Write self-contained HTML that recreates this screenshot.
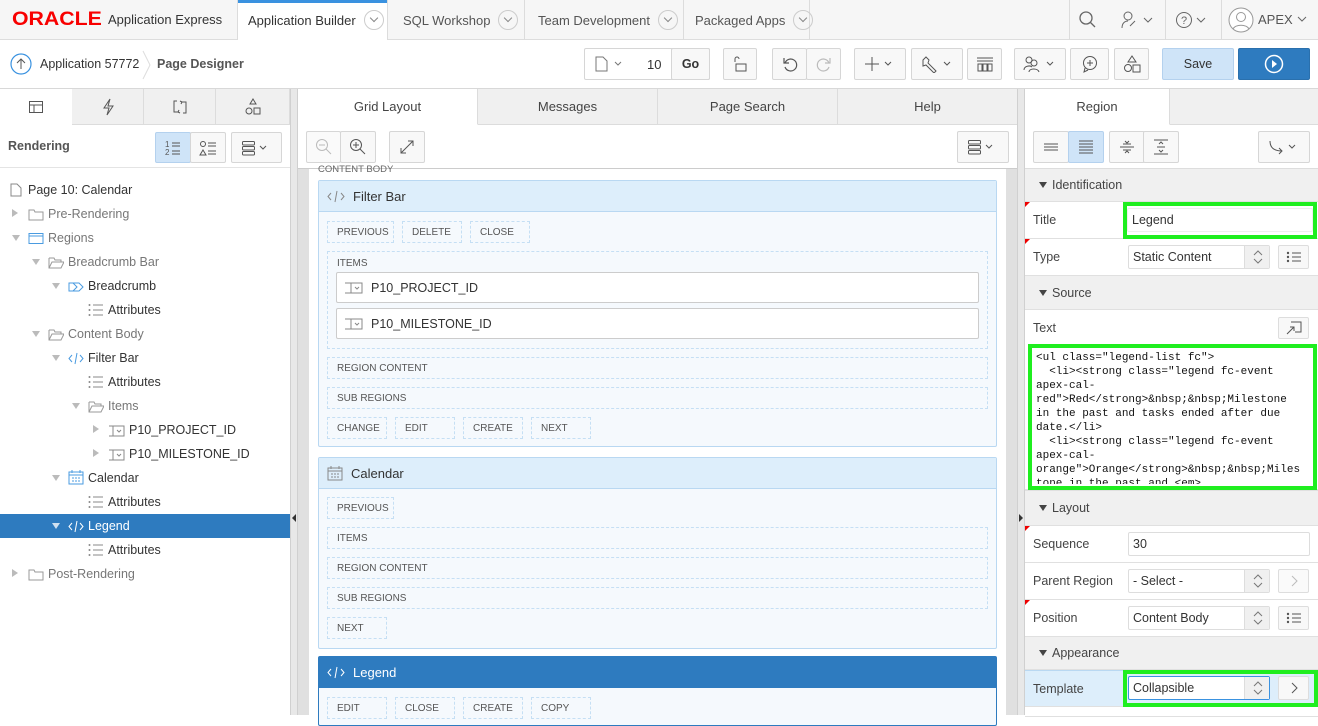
<!DOCTYPE html>
<html><head><meta charset="utf-8">
<style>
*{box-sizing:border-box;margin:0;padding:0}
body{width:1318px;height:715px;overflow:hidden;font-family:"Liberation Sans",sans-serif;font-size:13px;color:#333;background:#fff;position:relative}
.a{position:absolute}
.btn{position:absolute;border:1px solid #d6d6d6;border-radius:2px;background:#f8f8f8;display:flex;align-items:center;justify-content:center;color:#555}
.sep{position:absolute;top:0;height:40px;width:1px;background:#dcdcdc}
.tab{position:absolute;top:0;height:40px;display:flex;align-items:center;font-size:13px;color:#555;padding-left:11px}
.cv{display:inline-block;width:20px;height:20px;border:1px solid #ccc;border-radius:50%;margin-left:8px;position:relative}
.cv:after{content:"";position:absolute;left:6px;top:4px;width:5px;height:5px;border-right:1px solid #888;border-bottom:1px solid #888;transform:rotate(45deg)}
.ptab{position:absolute;top:89px;height:36px;background:#f0f0f0;border-bottom:1px solid #dcdcdc;border-right:1px solid #dcdcdc;display:flex;align-items:center;justify-content:center;color:#444}
.tr{position:absolute;height:24px;line-height:24px;font-size:12.5px;color:#333;white-space:nowrap}
.tr.g{color:#777}
.ar{display:inline-block;width:0;height:0;border-left:4px solid transparent;border-right:4px solid transparent;border-top:6px solid #bbb;margin-right:8px;vertical-align:1px}
.ar.r{border-top:4px solid transparent;border-bottom:4px solid transparent;border-left:6px solid #bbb;border-right:0;margin-right:10px}
.ic{display:inline-block;vertical-align:-3px;margin-right:4px}
.reg{position:absolute;left:318px;width:679px;border:1px solid #b9d8f2;background:#f5f9fd;border-radius:2px}
.rh{height:31px;background:#ddeefb;border-bottom:1px solid #b9d8f2;display:flex;align-items:center;padding-left:8px;font-size:13px;color:#333}
.dz{position:absolute;border:1px dashed #c5dff4;font-size:10px;color:#555;padding-left:9px;display:flex;align-items:center;height:22px}
.item{position:absolute;left:336px;width:643px;height:31px;background:#fff;border:1px solid #ccc;border-radius:2px;display:flex;align-items:center;padding-left:8px;font-size:12.5px;color:#333}
.ph{position:absolute;left:1025px;width:293px;background:#f0f0f0;border-bottom:1px solid #e0e0e0;font-size:12.5px;color:#444;padding-left:14px;display:flex;align-items:center}
.ph:before{content:"";border-left:4px solid transparent;border-right:4px solid transparent;border-top:6px solid #444;margin-right:5px}
.pr{position:absolute;left:1025px;width:293px;height:37px;border-bottom:1px solid #e0e0e0;background:#fff;font-size:12.5px;color:#444;padding-left:8px;display:flex;align-items:center}
.req:before{content:"";position:absolute;left:0;top:0;border-top:5px solid #e00;border-right:5px solid transparent}
.inp{position:absolute;height:24px;border:1px solid #ddd;background:#fff;font-size:12.5px;color:#333;display:flex;align-items:center;padding-left:4px;border-radius:2px}
.sel:after{content:"";position:absolute;right:0;top:0;width:24px;height:22px;background:#f0f0f0 url("") ;border-left:1px solid #ddd}
.ud{position:absolute;width:10px;height:16px}
.sb{position:absolute;height:24px;width:31px;border:1px solid #ddd;background:#f8f8f8;border-radius:2px;display:flex;align-items:center;justify-content:center}
.green{position:absolute;border:4px solid #1fee1f}
</style></head><body>

<!-- top bar -->
<div class="a" style="left:0;top:0;width:1318px;height:40px;background:#f6f6f6;border-bottom:1px solid #ddd"></div>
<div class="a" style="left:12px;top:10px;font-size:19px;font-weight:bold;color:#f80000;line-height:20px;transform:scaleX(1.12);transform-origin:left">ORACLE</div>
<div class="a" style="left:108px;top:12px;font-size:13px;color:#333">Application Express</div>
<div class="a" style="left:237px;top:0;width:150px;height:41px;background:#fff;border-top:3px solid #3a92e0"></div>
<div class="sep" style="left:237px"></div><div class="sep" style="left:387px"></div><div class="sep" style="left:524px"></div><div class="sep" style="left:683px"></div><div class="sep" style="left:809px"></div>
<div class="tab" style="left:237px;color:#333">Application Builder<span class="cv"></span></div>
<div class="tab" style="left:392px">SQL Workshop<span class="cv"></span></div>
<div class="tab" style="left:527px">Team Development<span class="cv"></span></div>
<div class="tab" style="left:684px">Packaged Apps<span class="cv"></span></div>
<div class="sep" style="left:1069px"></div><div class="sep" style="left:1165px"></div><div class="sep" style="left:1221px"></div>
<svg class="a" style="left:1078px;top:10px" width="20" height="20"><circle cx="8" cy="8" r="6" fill="none" stroke="#666" stroke-width="1.3"/><line x1="12.5" y1="12.5" x2="17" y2="17" stroke="#666" stroke-width="1.3"/></svg>
<svg class="a" style="left:1120px;top:10px" width="34" height="20"><circle cx="8" cy="6" r="4" fill="none" stroke="#666"/><path d="M2 18c0-5 3-7 6-7M10 16l5-5" stroke="#666" fill="none"/><path d="M24 8l4 4 4-4" stroke="#666" fill="none"/></svg>
<svg class="a" style="left:1175px;top:10px" width="36" height="20"><circle cx="9" cy="10" r="7.5" fill="none" stroke="#666"/><text x="6" y="14" font-size="11" fill="#666" font-family="Liberation Sans">?</text><path d="M22 8l4 4 4-4" stroke="#666" fill="none"/></svg>
<svg class="a" style="left:1228px;top:7px" width="26" height="26"><circle cx="13" cy="13" r="12" fill="#fff" stroke="#999"/><circle cx="13" cy="10" r="4.5" fill="none" stroke="#999"/><path d="M5 22c2-5 14-5 16 0" fill="none" stroke="#999"/></svg>
<div class="a" style="left:1258px;top:12px;font-size:13px;color:#555">APEX</div>
<svg class="a" style="left:1296px;top:14px" width="12" height="10"><path d="M2 3l4 4 4-4" stroke="#666" fill="none"/></svg>

<!-- toolbar -->
<div class="a" style="left:0;top:40px;width:1318px;height:49px;background:#fff;border-bottom:1px solid #d8d8d8"></div>
<svg class="a" style="left:10px;top:53px" width="22" height="22"><circle cx="11" cy="11" r="10" fill="none" stroke="#3a92e0" stroke-width="1.2"/><path d="M11 16V6M7 10l4-4 4 4" stroke="#555" fill="none"/></svg>
<div class="a" style="left:40px;top:57px;font-size:12.5px;color:#333">Application 57772</div>
<svg class="a" style="left:142px;top:50px" width="10" height="30"><path d="M1 1l7 14-7 14" stroke="#ddd" fill="none"/></svg>
<div class="a" style="left:157px;top:57px;font-size:12.5px;font-weight:bold;color:#555">Page Designer</div>
<div class="btn" style="left:584px;top:48px;width:126px;height:32px;justify-content:flex-start;background:#fff"></div>
<svg class="a" style="left:594px;top:56px" width="34" height="16"><path d="M2 1h7l4 4v10H2z" fill="none" stroke="#777"/><path d="M21 6l3 3 3-3" stroke="#777" fill="none"/></svg>
<div class="a" style="left:647px;top:57px;font-size:13px">10</div>
<div class="btn" style="left:671px;top:48px;width:39px;height:32px;font-weight:bold;font-size:12.5px;color:#333">Go</div>
<div class="btn" style="left:723px;top:48px;width:34px;height:32px"><svg width="16" height="16"><path d="M3 6V3a2 2 0 014 0M4 8h10v7H4z" fill="none" stroke="#555"/></svg></div>
<div class="btn" style="left:772px;top:48px;width:35px;height:32px"><svg width="18" height="18"><path d="M4 8a6 6 0 110 4M3 3v5h5" fill="none" stroke="#555" stroke-width="1.2"/></svg></div>
<div class="btn" style="left:806px;top:48px;width:35px;height:32px"><svg width="18" height="18"><path d="M14 8a6 6 0 100 4M15 3v5h-5" fill="none" stroke="#bbb" stroke-width="1.2"/></svg></div>
<div class="btn" style="left:854px;top:48px;width:52px;height:32px"><svg width="34" height="16"><path d="M9 1v14M2 8h14M22 6l3 3 3-3" stroke="#555" fill="none"/></svg></div>
<div class="btn" style="left:911px;top:48px;width:52px;height:32px"><svg width="34" height="18"><path d="M3 5l3-3 3 3-1 3 8 8-2 2-8-8-3 1z" stroke="#555" fill="none"/><path d="M24 7l3 3 3-3" stroke="#555" fill="none"/></svg></div>
<div class="btn" style="left:967px;top:48px;width:35px;height:32px"><svg width="18" height="16"><path d="M1 2h16M1 5h16M2 8h4v7H2zM7 8h4v7H7zM12 8h4v7h-4z" stroke="#555" fill="none"/></svg></div>
<div class="btn" style="left:1014px;top:48px;width:52px;height:32px"><svg width="36" height="18"><circle cx="7" cy="5" r="3" fill="none" stroke="#555"/><circle cx="12" cy="8" r="3" fill="none" stroke="#555"/><path d="M2 15c0-4 6-5 8-3M7 17c0-4 9-4 10 0" fill="none" stroke="#555"/><path d="M25 7l3 3 3-3" stroke="#555" fill="none"/></svg></div>
<div class="btn" style="left:1070px;top:48px;width:39px;height:32px"><svg width="18" height="18"><circle cx="9" cy="8" r="6.5" fill="none" stroke="#555"/><path d="M9 5v6M6 8h6M4 13l-1 4 4-2" stroke="#555" fill="none"/></svg></div>
<div class="btn" style="left:1114px;top:48px;width:35px;height:32px"><svg width="18" height="18"><path d="M9 1l4 6H5z" fill="none" stroke="#555"/><circle cx="5" cy="13" r="3.5" fill="none" stroke="#555"/><rect x="10" y="10" width="7" height="7" fill="none" stroke="#555"/></svg></div>
<div class="btn" style="left:1162px;top:48px;width:72px;height:32px;background:#cfe4f8;border-color:#b4d1ee;color:#333;font-size:12.5px">Save</div>
<div class="btn" style="left:1238px;top:48px;width:72px;height:32px;background:#2e7bbf;border-color:#2a70ad"><svg width="20" height="20"><circle cx="10" cy="10" r="8.5" fill="none" stroke="#fff" stroke-width="1.5"/><path d="M8 6l5 4-5 4z" fill="#fff"/></svg></div>

<!-- left panel -->
<div class="a" style="left:0;top:89px;width:290px;height:626px;background:#fff"></div>
<div class="ptab" style="left:72px;width:72px"><svg width="16" height="18"><path d="M10 1L4 10h5l-2 7 6-9H8z" fill="none" stroke="#555"/></svg></div>
<div class="ptab" style="left:144px;width:72px"><svg width="18" height="18"><path d="M6 3H3v11h4M12 15h3V4h-4M8 12l-1 2 2 1M10 6l1-2-2-1" fill="none" stroke="#555"/></svg></div>
<div class="ptab" style="left:216px;width:74px"><svg width="18" height="18"><path d="M9 1l3 5H6z" fill="none" stroke="#555"/><circle cx="5" cy="13" r="3" fill="none" stroke="#555"/><rect x="10" y="10" width="6" height="6" fill="none" stroke="#555"/></svg></div>
<div class="a" style="left:0;top:89px;width:72px;height:36px;display:flex;align-items:center;justify-content:center"><svg width="16" height="16"><rect x="1.5" y="2.5" width="13" height="11" fill="none" stroke="#555"/><path d="M1.5 6h13M6 6v7.5" stroke="#555"/></svg></div>
<div class="a" style="left:8px;top:139px;font-size:12.5px;font-weight:bold;color:#555">Rendering</div>
<div class="btn" style="left:155px;top:132px;width:36px;height:31px;background:#cfe4f8;border-color:#b4d1ee"><svg width="18" height="18" font-family="Liberation Sans" font-size="8" fill="#555"><text x="1" y="8">1</text><text x="1" y="16">2</text><path d="M8 4h8M8 7h8M8 12h8M8 15h8" stroke="#555"/></svg></div>
<div class="btn" style="left:190px;top:132px;width:36px;height:31px"><svg width="18" height="18"><circle cx="4" cy="5" r="2.5" fill="none" stroke="#555"/><path d="M4 11l3 5H1z" fill="none" stroke="#555"/><path d="M9 4h8M9 7h8M9 12h8M9 15h8" stroke="#555"/></svg></div>
<div class="btn" style="left:231px;top:132px;width:51px;height:31px"><svg width="32" height="18"><rect x="1.5" y="2.5" width="12" height="3.5" rx="1" fill="none" stroke="#555"/><rect x="1.5" y="7.5" width="12" height="3.5" rx="1" fill="none" stroke="#555"/><rect x="1.5" y="12.5" width="12" height="3.5" rx="1" fill="none" stroke="#555"/><path d="M19 7l3 3 3-3" stroke="#555" fill="none"/></svg></div>
<div class="a" style="left:0;top:167px;width:290px;height:1px;background:#e4e4e4"></div>

<div class="tr" style="left:10px;top:178px"><svg class="ic" width="12" height="14" style="margin-right:6px"><path d="M1 1h6l4 4v8H1z" fill="none" stroke="#888"/></svg>Page 10: Calendar</div>
<div class="tr g" style="left:12px;top:202px"><span class="ar r"></span><svg class="ic" width="16" height="13"><path d="M1 2h5l1 2h8v8H1z" fill="none" stroke="#999"/></svg>Pre-Rendering</div>
<div class="tr g" style="left:12px;top:226px"><span class="ar"></span><svg class="ic" width="16" height="13"><rect x="1" y="1.5" width="14" height="10" fill="none" stroke="#4a9be0"/><path d="M1 4h14" stroke="#4a9be0"/></svg>Regions</div>
<div class="tr g" style="left:32px;top:250px"><span class="ar"></span><svg class="ic" width="16" height="13"><path d="M1 2h5l1 2h6v2M1 2v10h12l3-6H4l-3 6" fill="none" stroke="#999"/></svg>Breadcrumb Bar</div>
<div class="tr" style="left:52px;top:274px"><span class="ar"></span><svg class="ic" width="16" height="12"><path d="M1 2h10l4 4-4 4H1z" fill="none" stroke="#4a9be0"/><path d="M5 2l4 4-4 4" fill="none" stroke="#4a9be0"/></svg>Breadcrumb</div>
<div class="tr" style="left:88px;top:298px"><svg class="ic" width="16" height="14"><path d="M5 2h10M5 7h10M5 12h10" stroke="#888"/><circle cx="1.5" cy="2" r="1" fill="#888"/><circle cx="1.5" cy="7" r="1" fill="#888"/><circle cx="1.5" cy="12" r="1" fill="#888"/></svg>Attributes</div>
<div class="tr g" style="left:32px;top:322px"><span class="ar"></span><svg class="ic" width="16" height="13"><path d="M1 2h5l1 2h6v2M1 2v10h12l3-6H4l-3 6" fill="none" stroke="#999"/></svg>Content Body</div>
<div class="tr" style="left:52px;top:346px"><span class="ar"></span><svg class="ic" width="16" height="13"><path d="M4 3L1 6.5 4 10M12 3l3 3.5-3 3.5M9 1L7 12" fill="none" stroke="#4a9be0"/></svg>Filter Bar</div>
<div class="tr" style="left:88px;top:370px"><svg class="ic" width="16" height="14"><path d="M5 2h10M5 7h10M5 12h10" stroke="#888"/><circle cx="1.5" cy="2" r="1" fill="#888"/><circle cx="1.5" cy="7" r="1" fill="#888"/><circle cx="1.5" cy="12" r="1" fill="#888"/></svg>Attributes</div>
<div class="tr g" style="left:72px;top:394px"><span class="ar"></span><svg class="ic" width="16" height="13"><path d="M1 2h5l1 2h6v2M1 2v10h12l3-6H4l-3 6" fill="none" stroke="#999"/></svg>Items</div>
<div class="tr" style="left:93px;top:418px"><span class="ar r"></span><svg class="ic" width="16" height="12"><path d="M0 1h15v10H4V1M0 11h4" fill="none" stroke="#888"/><path d="M8 5l2 2 2-2" fill="none" stroke="#888"/></svg>P10_PROJECT_ID</div>
<div class="tr" style="left:93px;top:442px"><span class="ar r"></span><svg class="ic" width="16" height="12"><path d="M0 1h15v10H4V1M0 11h4" fill="none" stroke="#888"/><path d="M8 5l2 2 2-2" fill="none" stroke="#888"/></svg>P10_MILESTONE_ID</div>
<div class="tr" style="left:52px;top:466px"><span class="ar"></span><svg class="ic" width="16" height="16"><rect x="1" y="3" width="14" height="12" fill="none" stroke="#4a9be0"/><path d="M1 6h14M4 1v3M12 1v3" stroke="#4a9be0"/><path d="M4 9h2M7 9h2M10 9h2M4 12h2M7 12h2M10 12h2" stroke="#4a9be0"/></svg>Calendar</div>
<div class="tr" style="left:88px;top:490px"><svg class="ic" width="16" height="14"><path d="M5 2h10M5 7h10M5 12h10" stroke="#888"/><circle cx="1.5" cy="2" r="1" fill="#888"/><circle cx="1.5" cy="7" r="1" fill="#888"/><circle cx="1.5" cy="12" r="1" fill="#888"/></svg>Attributes</div>
<div class="a" style="left:0;top:514px;width:290px;height:24px;background:#2e7bbf"></div>
<div class="tr" style="left:52px;top:514px;color:#fff"><span class="ar" style="border-top-color:#cfe0f0"></span><svg class="ic" width="16" height="13"><path d="M4 3L1 6.5 4 10M12 3l3 3.5-3 3.5M9 1L7 12" fill="none" stroke="#fff"/></svg>Legend</div>
<div class="tr" style="left:88px;top:538px"><svg class="ic" width="16" height="14"><path d="M5 2h10M5 7h10M5 12h10" stroke="#888"/><circle cx="1.5" cy="2" r="1" fill="#888"/><circle cx="1.5" cy="7" r="1" fill="#888"/><circle cx="1.5" cy="12" r="1" fill="#888"/></svg>Attributes</div>
<div class="tr g" style="left:12px;top:562px"><span class="ar r"></span><svg class="ic" width="16" height="13"><path d="M1 2h5l1 2h8v8H1z" fill="none" stroke="#999"/></svg>Post-Rendering</div>

<!-- splitters -->
<div class="a" style="left:290px;top:89px;width:8px;height:626px;background:#e8e8e8;border-left:1px solid #d0d0d0;border-right:1px solid #d0d0d0"></div>
<div class="a" style="left:292px;top:514px;border-top:4px solid transparent;border-bottom:4px solid transparent;border-right:4px solid #333"></div>
<div class="a" style="left:1017px;top:89px;width:8px;height:626px;background:#e8e8e8;border-left:1px solid #d0d0d0;border-right:1px solid #d0d0d0"></div>
<div class="a" style="left:1019px;top:514px;border-top:4px solid transparent;border-bottom:4px solid transparent;border-left:4px solid #333"></div>

<!-- middle -->
<div class="ptab" style="left:298px;width:180px;background:#fff;border-bottom-color:#fff">Grid Layout</div>
<div class="ptab" style="left:478px;width:180px">Messages</div>
<div class="ptab" style="left:658px;width:180px">Page Search</div>
<div class="ptab" style="left:838px;width:179px;border-right:0">Help</div>
<div class="btn" style="left:306px;top:131px;width:35px;height:32px;background:#fafafa"><svg width="18" height="18"><circle cx="7" cy="7" r="5.5" fill="none" stroke="#bbb"/><path d="M4 7h6M11 11l5 5" stroke="#bbb"/></svg></div>
<div class="btn" style="left:340px;top:131px;width:36px;height:32px"><svg width="18" height="18"><circle cx="7" cy="7" r="5.5" fill="none" stroke="#555"/><path d="M4 7h6M7 4v6M11 11l5 5" stroke="#555"/></svg></div>
<div class="btn" style="left:389px;top:131px;width:36px;height:32px"><svg width="16" height="16"><path d="M2 14L14 2M9 2h5v5M2 9v5h5" fill="none" stroke="#555"/></svg></div>
<div class="btn" style="left:957px;top:131px;width:52px;height:32px"><svg width="32" height="18"><rect x="1.5" y="2.5" width="12" height="3.5" rx="1" fill="none" stroke="#555"/><rect x="1.5" y="7.5" width="12" height="3.5" rx="1" fill="none" stroke="#555"/><rect x="1.5" y="12.5" width="12" height="3.5" rx="1" fill="none" stroke="#555"/><path d="M19 7l3 3 3-3" stroke="#555" fill="none"/></svg></div>
<div class="a" style="left:298px;top:168px;width:719px;height:547px;background:#fff;border-top:1px solid #ccc"></div>
<div class="a" style="left:298px;top:169px;width:11px;height:546px;background:#e0e0e0"></div>
<div class="a" style="left:1006px;top:169px;width:11px;height:546px;background:#e0e0e0"></div>
<div class="a" style="left:318px;top:164px;font-size:9.5px;color:#666">CONTENT BODY</div>

<div class="reg" style="top:180px;height:267px"><div class="rh"><svg class="ic" width="18" height="13" style="margin-right:8px"><path d="M4 3L1 6.5 4 10M14 3l3 3.5-3 3.5M10 1L8 12" fill="none" stroke="#888"/></svg>Filter Bar</div></div>
<div class="dz" style="left:327px;top:221px;width:67px">PREVIOUS</div>
<div class="dz" style="left:402px;top:221px;width:60px">DELETE</div>
<div class="dz" style="left:470px;top:221px;width:60px">CLOSE</div>
<div class="dz" style="left:327px;top:251px;width:661px;height:98px;align-items:flex-start;padding-top:6px">ITEMS</div>
<div class="item" style="top:272px"><svg class="ic" width="18" height="12" style="margin-right:8px"><path d="M0 1h17v10H6V1M0 11h6" fill="none" stroke="#888"/><path d="M10 5l2 2 2-2" fill="none" stroke="#888"/></svg>P10_PROJECT_ID</div>
<div class="item" style="top:308px"><svg class="ic" width="18" height="12" style="margin-right:8px"><path d="M0 1h17v10H6V1M0 11h6" fill="none" stroke="#888"/><path d="M10 5l2 2 2-2" fill="none" stroke="#888"/></svg>P10_MILESTONE_ID</div>
<div class="dz" style="left:327px;top:357px;width:661px">REGION CONTENT</div>
<div class="dz" style="left:327px;top:387px;width:661px">SUB REGIONS</div>
<div class="dz" style="left:327px;top:417px;width:60px">CHANGE</div>
<div class="dz" style="left:395px;top:417px;width:60px">EDIT</div>
<div class="dz" style="left:463px;top:417px;width:60px">CREATE</div>
<div class="dz" style="left:531px;top:417px;width:60px">NEXT</div>

<div class="reg" style="top:457px;height:192px"><div class="rh"><svg class="ic" width="16" height="16" style="margin-right:8px"><rect x="1" y="3" width="14" height="12" fill="none" stroke="#888"/><path d="M1 6h14M4 1v3M12 1v3M4 9h2M7 9h2M10 9h2M4 12h2M7 12h2M10 12h2" stroke="#888"/></svg>Calendar</div></div>
<div class="dz" style="left:327px;top:497px;width:67px">PREVIOUS</div>
<div class="dz" style="left:327px;top:527px;width:661px">ITEMS</div>
<div class="dz" style="left:327px;top:557px;width:661px">REGION CONTENT</div>
<div class="dz" style="left:327px;top:587px;width:661px">SUB REGIONS</div>
<div class="dz" style="left:327px;top:617px;width:60px">NEXT</div>

<div class="reg" style="top:656px;height:70px;border-color:#2e7bbf"><div class="rh" style="background:#2e7bbf;color:#fff;border-color:#2e7bbf"><svg class="ic" width="18" height="13" style="margin-right:8px"><path d="M4 3L1 6.5 4 10M14 3l3 3.5-3 3.5M10 1L8 12" fill="none" stroke="#fff"/></svg>Legend</div></div>
<div class="dz" style="left:327px;top:697px;width:60px">EDIT</div>
<div class="dz" style="left:395px;top:697px;width:60px">CLOSE</div>
<div class="dz" style="left:463px;top:697px;width:60px">CREATE</div>
<div class="dz" style="left:531px;top:697px;width:60px">COPY</div>

<!-- right panel -->
<div class="a" style="left:1025px;top:89px;width:293px;height:626px;background:#fff"></div>
<div class="ptab" style="left:1025px;width:145px;background:#fff;border-bottom-color:#fff">Region</div>
<div class="ptab" style="left:1170px;width:148px;border-right:0"></div>
<div class="btn" style="left:1033px;top:131px;width:36px;height:32px"><svg width="16" height="12"><path d="M1 3h14M1 6h14M1 9h14" stroke="#555"/></svg></div>
<div class="btn" style="left:1068px;top:131px;width:36px;height:32px;background:#cfe4f8;border-color:#b4d1ee"><svg width="16" height="16"><path d="M1 2h14M1 5h14M1 8h14M1 11h14M1 14h14" stroke="#555"/></svg></div>
<div class="btn" style="left:1109px;top:131px;width:36px;height:32px"><svg width="16" height="16"><path d="M1 8h14M4 5h8M4 11h8M6 2l2 2 2-2M6 14l2-2 2 2" stroke="#555" fill="none"/></svg></div>
<div class="btn" style="left:1143px;top:131px;width:36px;height:32px"><svg width="16" height="16"><path d="M1 1h14M1 15h14M4 8h8M6 5l2-2 2 2M6 11l2 2 2-2" stroke="#555" fill="none"/></svg></div>
<div class="btn" style="left:1258px;top:131px;width:52px;height:32px"><svg width="34" height="16"><path d="M3 2c0 7 4 10 12 10M12 9l3 3-3 3" stroke="#555" fill="none"/><path d="M22 6l3 3 3-3" stroke="#555" fill="none"/></svg></div>
<div class="a" style="left:1025px;top:168px;width:293px;height:1px;background:#ddd"></div>

<div class="ph" style="top:169px;height:33px">Identification</div>
<div class="pr req" style="top:202px">Title</div>
<div class="pr req" style="top:239px">Type</div>
<div class="inp sel" style="left:1128px;top:245px;width:142px">Static Content</div>
<svg class="ud" style="left:1253px;top:249px"><path d="M1 6l4-4 4 4M1 10l4 4 4-4" stroke="#777" fill="none"/></svg>
<div class="sb" style="left:1278px;top:245px"><svg width="16" height="12"><circle cx="2" cy="2" r="1.2" fill="#555"/><circle cx="2" cy="6" r="1.2" fill="#555"/><circle cx="2" cy="10" r="1.2" fill="#555"/><path d="M6 2h9M6 6h9M6 10h9" stroke="#555"/></svg></div>
<div class="ph" style="top:276px;height:34px">Source</div>
<div class="pr" style="top:310px;height:180px;align-items:flex-start;padding-top:11px">Text</div>
<div class="sb" style="left:1278px;top:317px;height:22px"><svg width="16" height="14"><path d="M5 1h10v10H9M1 13l7-7M4 6h4v4" stroke="#555" fill="none"/></svg></div>
<div class="green" style="left:1123px;top:202px;width:194px;height:37px"></div>
<div class="inp" style="left:1127px;top:208px;width:186px;background:#fff;border-color:#eee">Legend</div>
<div class="green" style="left:1028px;top:344px;width:289px;height:146px"></div>
<div class="a" style="left:1033px;top:349px;width:279px;height:136px;background:#fff"></div>
<div class="a" style="left:1036px;top:351px;width:266px;height:133px;overflow:hidden;font-family:'Liberation Mono',monospace;font-size:11px;line-height:14px;color:#111;white-space:pre-wrap;word-break:normal;overflow-wrap:anywhere">&lt;ul class="legend-list fc"&gt;
  &lt;li&gt;&lt;strong class="legend fc-event apex-cal-red"&gt;Red&lt;/strong&gt;&amp;nbsp;&amp;nbsp;Milestone in the past and tasks ended after due date.&lt;/li&gt;
  &lt;li&gt;&lt;strong class="legend fc-event apex-cal-orange"&gt;Orange&lt;/strong&gt;&amp;nbsp;&amp;nbsp;Milestone in the past and &lt;em&gt;</div>
<div class="ph" style="top:490px;height:36px;border-top:1px solid #e0e0e0">Layout</div>
<div class="pr req" style="top:526px">Sequence</div>
<div class="inp" style="left:1128px;top:532px;width:182px">30</div>
<div class="pr" style="top:563px">Parent Region</div>
<div class="inp sel" style="left:1128px;top:569px;width:142px">- Select -</div>
<svg class="ud" style="left:1253px;top:573px"><path d="M1 6l4-4 4 4M1 10l4 4 4-4" stroke="#777" fill="none"/></svg>
<div class="sb" style="left:1278px;top:569px;background:#fafafa"><svg width="8" height="12"><path d="M2 1l5 5-5 5" stroke="#bbb" fill="none"/></svg></div>
<div class="pr req" style="top:600px">Position</div>
<div class="inp sel" style="left:1128px;top:606px;width:142px">Content Body</div>
<svg class="ud" style="left:1253px;top:610px"><path d="M1 6l4-4 4 4M1 10l4 4 4-4" stroke="#777" fill="none"/></svg>
<div class="sb" style="left:1278px;top:606px"><svg width="16" height="12"><circle cx="2" cy="2" r="1.2" fill="#555"/><circle cx="2" cy="6" r="1.2" fill="#555"/><circle cx="2" cy="10" r="1.2" fill="#555"/><path d="M6 2h9M6 6h9M6 10h9" stroke="#555"/></svg></div>
<div class="ph" style="top:637px;height:33px">Appearance</div>
<div class="pr" style="top:670px;background:#ddeefb;border-top:1px solid #b9d8f2">Template</div>
<div class="green" style="left:1123px;top:670px;width:195px;height:37px"></div>
<div class="inp sel" style="left:1128px;top:676px;width:142px;border-color:#3a92e0">Collapsible</div>
<svg class="ud" style="left:1253px;top:680px"><path d="M1 6l4-4 4 4M1 10l4 4 4-4" stroke="#777" fill="none"/></svg>
<div class="sb" style="left:1278px;top:676px"><svg width="8" height="12"><path d="M2 1l5 5-5 5" stroke="#555" fill="none"/></svg></div>
<div class="pr" style="top:707px;height:10px"></div>
</body></html>
